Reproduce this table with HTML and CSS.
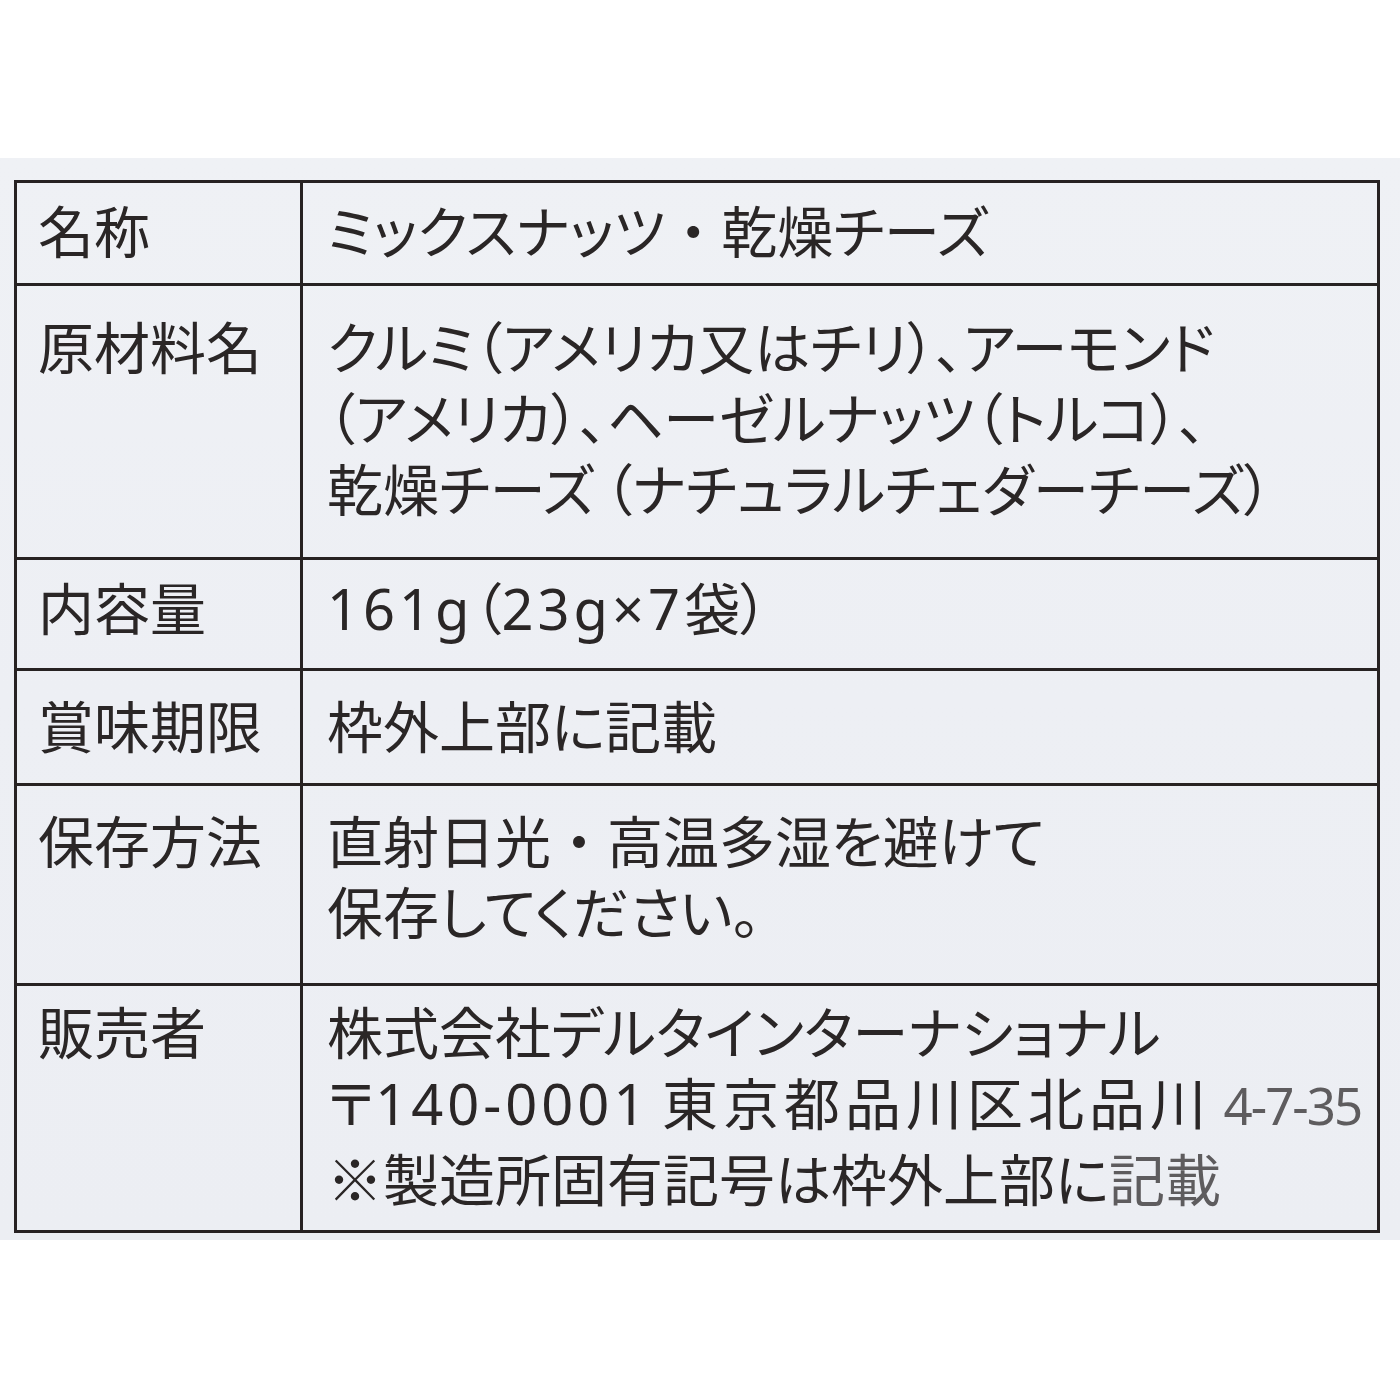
FILE: index.html
```html
<!DOCTYPE html>
<html lang="ja">
<head>
<meta charset="utf-8">
<link rel="stylesheet" href="styles.css">
</head>
<body>
<div class="top"></div>
<div class="sheet">
  <div class="table">
    <div class="row r1">
      <div class="label">名称</div>
      <div class="value">ミックスナッツ<span class="dot">・</span>乾燥チーズ</div>
    </div>
    <div class="row r2">
      <div class="label">原材料名</div>
      <div class="value">クルミ（アメリカ又はチリ）、アーモンド<br>（アメリカ）、ヘーゼルナッツ（トルコ）、<br>乾燥チーズ<span class="gap"></span>（ナチュラルチェダーチーズ）</div>
    </div>
    <div class="row r3">
      <div class="label">内容量</div>
      <div class="value"><span class="num">161g</span>（<span class="num">23g×7</span>袋）</div>
    </div>
    <div class="row r4">
      <div class="label">賞味期限</div>
      <div class="value">枠外上部に記載</div>
    </div>
    <div class="row r5">
      <div class="label">保存方法</div>
      <div class="value">直射日光<span class="dot">・</span>高温多湿を避けて<br>保存してください。</div>
    </div>
    <div class="row r6">
      <div class="label">販売者</div>
      <div class="value">株式会社デルタインターナショナル<br>〒<span class="num zip">140-0001</span> <span class="wide">東京都品川区北品川</span> <span class="num fade tight">4-7-35</span><br>※製造所固有記号は枠外上部に<span class="fade">記載</span></div>
    </div>
  </div>
</div>
<div class="bottom"></div>
</body>
</html>
```
FILE: styles.css
```css
html, body {
  margin: 0;
  padding: 0;
  background: #ffffff;
}
body {
  width: 1400px;
  height: 1400px;
  overflow: hidden;
  font-family: "Noto Sans CJK JP", "Noto Sans", sans-serif;
  color: #2a2626;
}
.top {
  height: 158px;
}
.sheet {
  height: 1082px;
  background: linear-gradient(180deg, #eff1f5 0%, #edeff4 50%, #eceef3 100%);
  padding-top: 22px;
  box-sizing: border-box;
}
.table {
  margin-left: 14px;
  width: 1366px;
  border: 3px solid #272222;
  box-sizing: border-box;
}
.row {
  display: grid;
  grid-template-columns: 283px 1fr;
  box-sizing: border-box;
  border-top: 3px solid #272222;
  font-size: 56px;
  line-height: 71px;
  font-feature-settings: "palt";
}
.row.r1 { border-top: none; height: 100px; }
.row.r2 { height: 274px; }
.row.r3 { height: 111px; }
.row.r4 { height: 115px; }
.row.r5 { height: 200px; }
.row.r6 { height: 247px; }
.label {
  padding-left: 21px;
  white-space: nowrap;
}
.value {
  border-left: 3px solid #272222;
  padding-left: 24px;
  white-space: nowrap;
}
.r1 .label, .r1 .value { padding-top: 10px; }
.r2 .label, .r2 .value { padding-top: 23px; }
.r3 .label, .r3 .value { padding-top: 10px; }
.r4 .label, .r4 .value { padding-top: 17px; }
.r5 .label, .r5 .value { padding-top: 17px; }
.r6 .label, .r6 .value { padding-top: 8px; }
.dot {
  font-feature-settings: normal;
}
.gap {
  display: inline-block;
  width: 10px;
}
.num {
  font-family: "Noto Sans", "Noto Sans CJK JP", sans-serif;
  letter-spacing: 4px;
}
.zip {
  letter-spacing: 4px;
}
.wide {
  letter-spacing: 5px;
}
.tight {
  font-size: 51px;
  letter-spacing: -2px;
}
.fade {
  color: #5e5c5e;
}
.bottom {
  height: 160px;
}
```
